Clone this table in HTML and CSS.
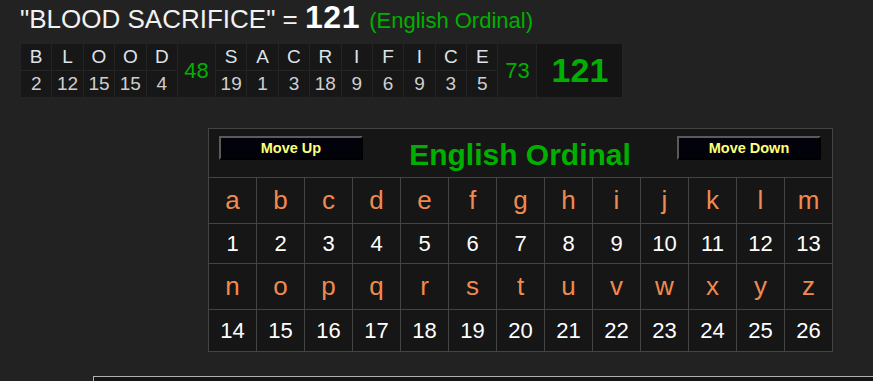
FILE: index.html
```html
<!DOCTYPE html>
<html lang="en">
<head>
    <meta charset="UTF-8">
    <title>Gematria - BLOOD SACRIFICE</title>
    <link rel="stylesheet" href="styles.css">
</head>
<body>
    <div class="phrase">"BLOOD SACRIFICE" = <span class="phrase-total">121</span> <span class="phrase-cipher">(English Ordinal)</span></div>

    <table class="breakdown">
        <tr class="letters">
            <td>B</td><td>L</td><td>O</td><td>O</td><td>D</td>
            <td class="word-sum" rowspan="2">48</td>
            <td>S</td><td>A</td><td>C</td><td>R</td><td>I</td><td>F</td><td>I</td><td>C</td><td>E</td>
            <td class="word-sum wide" rowspan="2">73</td>
            <td class="grand-total" rowspan="2">121</td>
        </tr>
        <tr class="values">
            <td>2</td><td>12</td><td>15</td><td>15</td><td>4</td>
            <td>19</td><td>1</td><td>3</td><td>18</td><td>9</td><td>6</td><td>9</td><td>3</td><td>5</td>
        </tr>
    </table>

    <table class="chart">
        <tr>
            <td class="chart-head" colspan="13">
                <div class="chart-bar">
                    <button class="move-btn">Move Up</button>
                    <span class="chart-title">English Ordinal</span>
                    <button class="move-btn">Move Down</button>
                </div>
            </td>
        </tr>
        <tr class="chart-letters">
            <td>a</td><td>b</td><td>c</td><td>d</td><td>e</td><td>f</td><td>g</td><td>h</td><td>i</td><td>j</td><td>k</td><td>l</td><td>m</td>
        </tr>
        <tr class="chart-values">
            <td>1</td><td>2</td><td>3</td><td>4</td><td>5</td><td>6</td><td>7</td><td>8</td><td>9</td><td>10</td><td>11</td><td>12</td><td>13</td>
        </tr>
        <tr class="chart-letters">
            <td>n</td><td>o</td><td>p</td><td>q</td><td>r</td><td>s</td><td>t</td><td>u</td><td>v</td><td>w</td><td>x</td><td>y</td><td>z</td>
        </tr>
        <tr class="chart-values last">
            <td>14</td><td>15</td><td>16</td><td>17</td><td>18</td><td>19</td><td>20</td><td>21</td><td>22</td><td>23</td><td>24</td><td>25</td><td>26</td>
        </tr>
    </table>

    <div class="history-box"></div>
</body>
</html>
```

FILE: styles.css
```css
body {
    font-family: Arial, 'Liberation Sans', Helvetica, sans-serif;
    margin: 0;
    padding: 0;
    background: #222;
    color: #eee;
    overflow: hidden;
}
.phrase {
    margin: 0 0 0 20px;
    height: 43px;
    font-size: 26px;
    line-height: 34px;
    color: #f2f2f2;
    white-space: nowrap;
}
.phrase-total {
    font-size: 32px;
    font-weight: bold;
    letter-spacing: 0.5px;
    color: #fff;
}
.phrase-cipher {
    margin-left: 2px;
    font-size: 22px;
    color: #00b000;
}
.breakdown {
    border-collapse: collapse;
    margin-left: 20px;
    background: #171717;
}
.breakdown td {
    border: 1px solid #242424;
    width: 30.4px;
    height: 26px;
    padding: 0;
    text-align: center;
    font-size: 19px;
}
.breakdown .letters td {
    color: #dde3ea;
}
.breakdown .values td {
    color: #cfcfcf;
}
.breakdown .word-sum {
    width: 37px;
    font-size: 22px;
    color: #00b000 !important;
    background: #181818;
}
.breakdown .word-sum.wide {
    width: 38px;
}
.breakdown .grand-total {
    width: 85px;
    font-size: 34px;
    font-weight: bold;
    color: #00b000 !important;
    background: #141414;
}
.chart {
    margin: 30px 0 0 208px;
    border-collapse: collapse;
    background: #161616;
}
.chart td {
    border: 1px solid #444;
    width: 47px;
    padding: 0;
    text-align: center;
}
.chart-head {
    height: 48px;
    vertical-align: top;
}
.chart-bar {
    display: flex;
    align-items: flex-start;
    justify-content: space-between;
    padding: 7px 11px 0 10px;
}
.move-btn {
    width: 144px;
    height: 24px;
    padding: 0;
    background: #02020a;
    border: 2px outset #5a5a5a;
    border-right-color: #2c2c2c;
    border-bottom-color: #2c2c2c;
    color: #ffff78;
    font-family: Arial, 'Liberation Sans', sans-serif;
    font-size: 14.5px;
    font-weight: bold;
}
.chart-title {
    margin-top: 2px;
    font-size: 30px;
    line-height: 34px;
    font-weight: bold;
    color: #00b000;
}
.chart-letters td {
    height: 45px;
    font-size: 26px;
    color: #f08a4e;
}
.chart-values td {
    height: 39px;
    font-size: 22px;
    color: #fff;
}
.chart-values.last td {
    height: 41px;
}
.history-box {
    margin: 24px 0 0 93px;
    height: 40px;
    border-top: 1px solid #b0b0b0;
    border-left: 1px solid #b0b0b0;
    background: #151515;
}
```
